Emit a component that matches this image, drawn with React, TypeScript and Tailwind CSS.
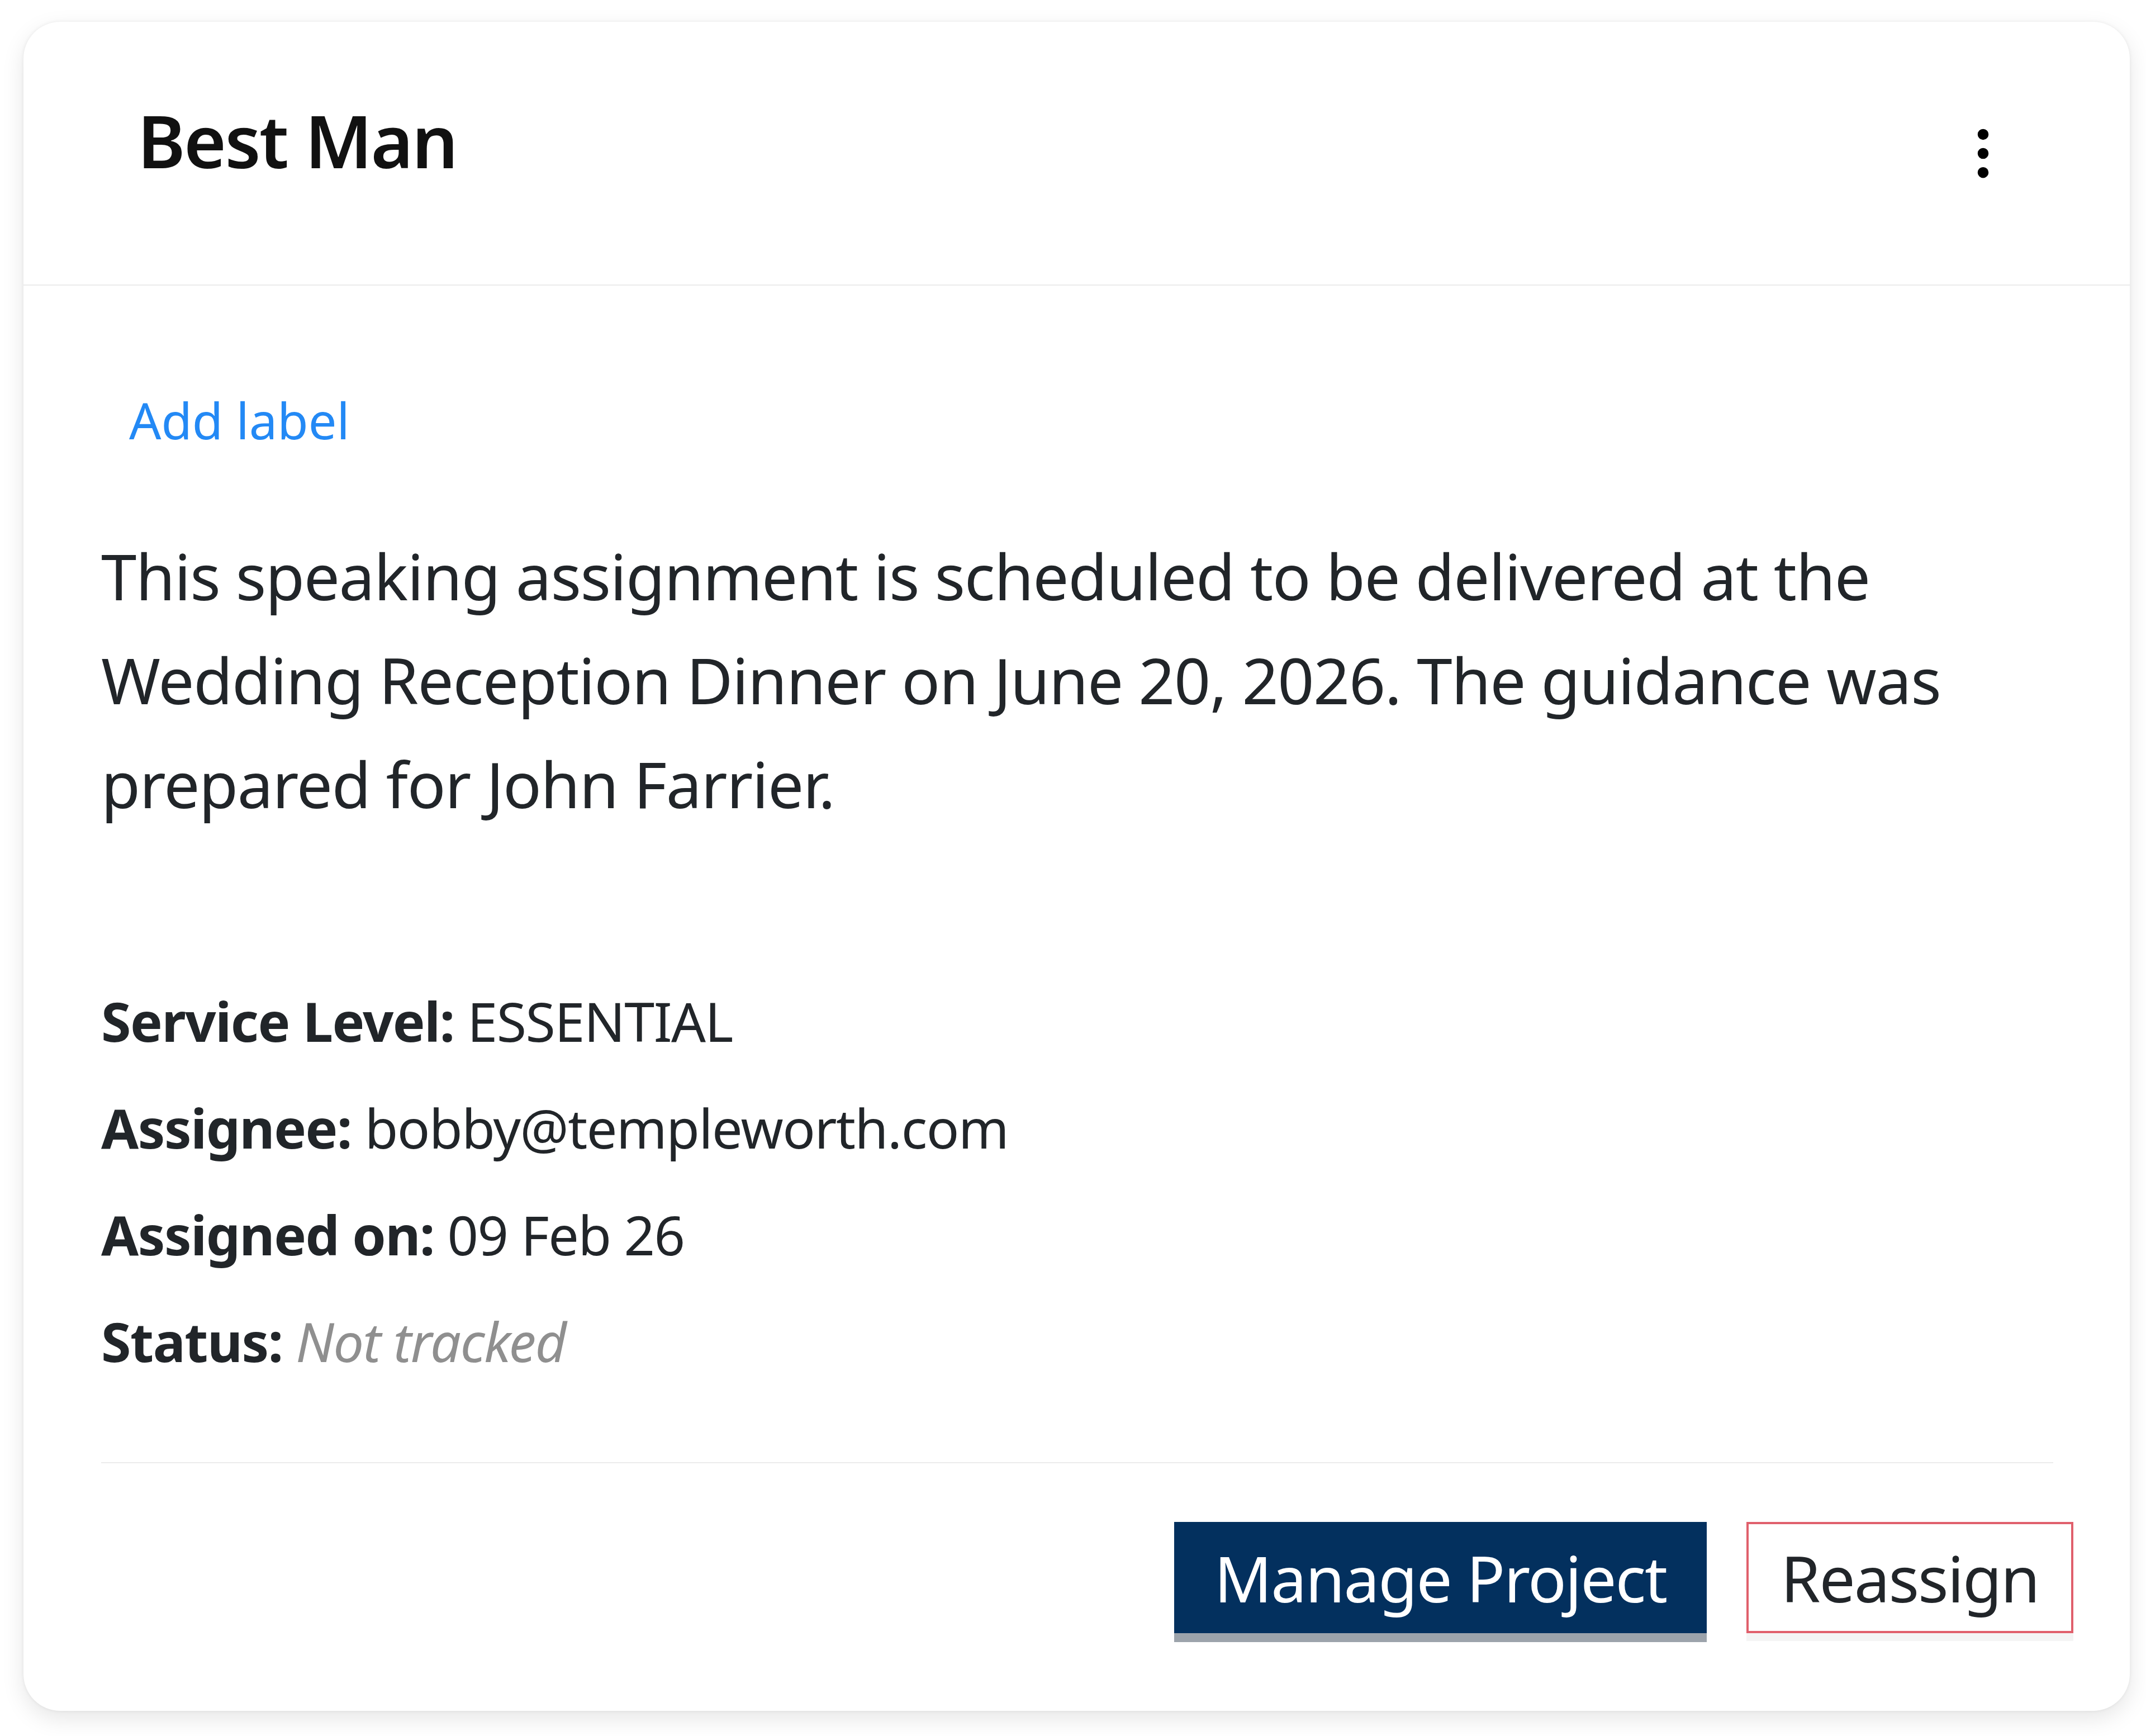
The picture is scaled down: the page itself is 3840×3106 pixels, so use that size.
import { EllipsisVertical } from "lucide-react"

const details = [
  { label: "Service Level:", value: "ESSENTIAL" },
  { label: "Assignee:", value: "bobby@templeworth.com" },
  { label: "Assigned on:", value: "09 Feb 26" },
]

export default function App() {
  return (
    <div className="min-h-screen bg-white pl-[42px] pt-[39px] font-['Segoe_UI','Noto_Sans',sans-serif] text-[#212529]">
      <div className="flex w-[3769px] flex-col rounded-[66px] bg-white shadow-[0_14px_40px_rgba(0,0,0,0.10),0_0_6px_rgba(0,0,0,0.07)]">
        <div className="flex h-[472px] items-center justify-between border-b-2 border-[#ececec] pl-[204px] pr-[204px]">
          <h2 className="mb-[46px] text-[130px] font-semibold leading-[1.2] tracking-[-0.02em] text-[#111]">
            Best Man
          </h2>
          <button className="text-black">
            <EllipsisVertical size={117} strokeWidth={2} />
          </button>
        </div>

        <div className="flex flex-col pl-[139px] pr-[137px]">
          <a className="ml-[50px] mt-[173px] text-[90px] leading-[1.5] text-[#2389f5]">
            Add label
          </a>

          <p className="mt-[118px] text-[114px] leading-[186px] tracking-[-0.012em]">
            This speaking assignment is scheduled to be delivered at the
            Wedding Reception Dinner on June 20, 2026. The guidance was
            prepared for John Farrier.
          </p>

          <div className="mt-[236px] flex flex-col text-[97px] leading-[191px] tracking-[-0.015em]">
            {details.map(d => (
              <div key={d.label}>
                <span className="font-bold">{d.label}</span> {d.value}
              </div>
            ))}
            <div>
              <span className="font-bold">Status:</span>{" "}
              <span className="italic text-[#8f8f8f]">Not tracked</span>
            </div>
          </div>

          <div className="mt-[121px] h-[2px] bg-[#ececec]" />
        </div>

        <div className="flex justify-end gap-[71px] pb-[139px] pr-[101px] pt-[105px] text-[114px] tracking-[-0.018em]">
          <button className="h-[199px] w-[953px] bg-[#03305e] text-white shadow-[0_16px_0_#9ca3ab]">
            Manage Project
          </button>
          <button className="h-[199px] w-[585px] border-4 border-[#e0606c] bg-white text-[#212529] shadow-[0_14px_0_#f4f4f4]">
            Reassign
          </button>
        </div>
      </div>
    </div>
  )
}
